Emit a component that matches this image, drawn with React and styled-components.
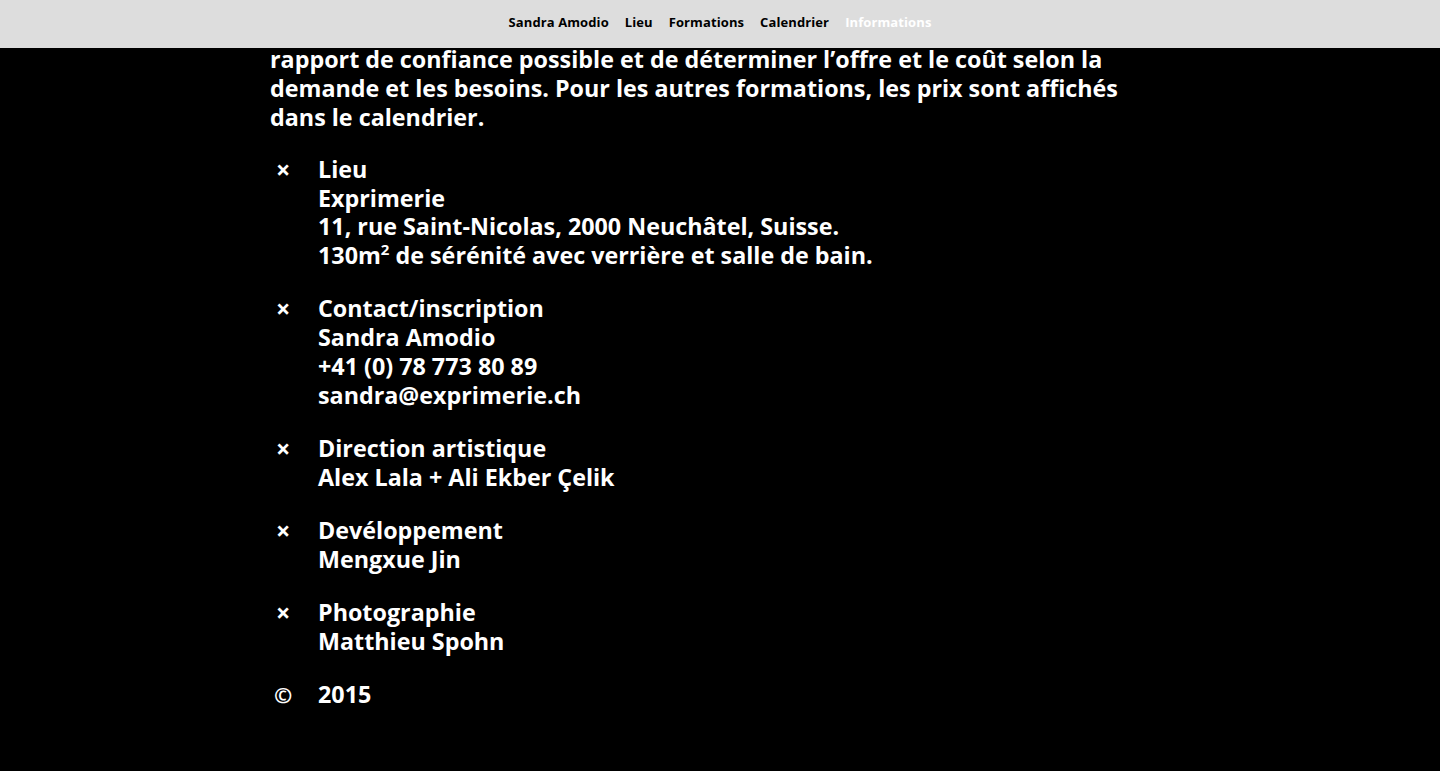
import styled, { createGlobalStyle } from "styled-components";

const GlobalStyle = createGlobalStyle`
  html, body {
    margin: 0;
    padding: 0;
    background: #000;
  }
  body {
    font-family: "Open Sans", "Liberation Sans", sans-serif;
    -webkit-font-smoothing: antialiased;
  }
`;

const menu = [
    { label: "Sandra Amodio" },
    { label: "Lieu" },
    { label: "Formations" },
    { label: "Calendrier" },
    { label: "Informations", active: true },
];

const intro = [
    "rapport de confiance possible et de déterminer l’offre et le coût selon la",
    "demande et les besoins. Pour les autres formations, les prix sont affichés",
    "dans le calendrier.",
];

const infos = [
    {
        mark: "×",
        lines: [
            "Lieu",
            "Exprimerie",
            "11, rue Saint-Nicolas, 2000 Neuchâtel, Suisse.",
            <>130m<sup>2</sup> de sérénité avec verrière et salle de bain.</>,
        ],
    },
    {
        mark: "×",
        lines: ["Contact/inscription", "Sandra Amodio", "+41 (0) 78 773 80 89", "sandra@exprimerie.ch"],
    },
    { mark: "×", lines: ["Direction artistique", "Alex Lala + Ali Ekber Çelik"] },
    { mark: "×", lines: ["Devéloppement", "Mengxue Jin"] },
    { mark: "×", lines: ["Photographie", "Matthieu Spohn"] },
    { mark: "©", lines: ["2015"], copy: true },
];

export default function App() {
    return (
        <>
            <GlobalStyle />
            <Header>
                <Nav>
                    {menu.map((item) => (
                        <NavLink key={item.label} $active={item.active}>
                            {item.label}
                        </NavLink>
                    ))}
                </Nav>
            </Header>
            <Main>
                <Intro>
                    {intro.map((line, i) => (
                        <Line key={i}>{line}</Line>
                    ))}
                </Intro>
                <List>
                    {infos.map((info, i) => (
                        <Item key={i}>
                            <Mark $copy={info.copy}>{info.mark}</Mark>
                            <Lines>
                                {info.lines.map((line, j) => (
                                    <Line key={j}>{line}</Line>
                                ))}
                            </Lines>
                        </Item>
                    ))}
                </List>
            </Main>
        </>
    );
}

const Header = styled.header`
    position: fixed;
    top: 0;
    left: 0;
    right: 0;
    height: 48px;
    background-color: #dddddd;
    display: flex;
    justify-content: center;
    align-items: center;
    z-index: 10;
`;

const Nav = styled.nav`
    display: flex;
    gap: 16px;
    padding-bottom: 4px;
`;

const NavLink = styled.a`
    font-family: "Open Sans", sans-serif;
    font-weight: 700;
    font-size: 13px;
    letter-spacing: 0.1px;
    white-space: nowrap;
    color: ${(p) => (p.$active ? "#ffffff" : "#000000")};
    cursor: pointer;
`;

const Main = styled.main`
    width: 900px;
    margin: 0 auto;
    padding: 45px 0 60px;
    color: #ffffff;
    font-weight: 700;
    font-size: 23.3px;
    line-height: 28.8px;
`;

const Intro = styled.div`
    display: flex;
    flex-direction: column;
    margin: 0 0 23.5px;
`;

const List = styled.div`
    display: flex;
    flex-direction: column;
    gap: 24.4px;
`;

const Item = styled.div`
    display: flex;
`;

const Mark = styled.span`
    width: 48px;
    flex-shrink: 0;
    padding-left: ${(p) => (p.$copy ? "4px" : "6px")};
    box-sizing: border-box;
    font-size: ${(p) => (p.$copy ? "22px" : "25px")};
`;

const Lines = styled.div`
    display: flex;
    flex-direction: column;
`;

const Line = styled.span`
    white-space: nowrap;
    sup {
        font-size: 15px;
        line-height: 0;
        vertical-align: 9px;
    }
`;
